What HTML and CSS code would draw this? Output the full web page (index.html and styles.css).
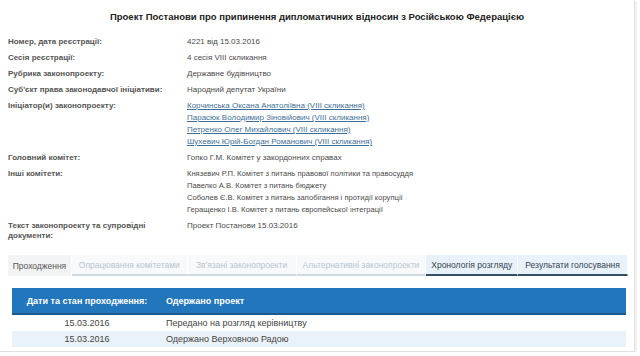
FILE: index.html
```html
<!DOCTYPE html>
<html lang="uk">
<head>
<meta charset="utf-8">
<title>Проект Постанови</title>
<link rel="stylesheet" href="styles.css">
</head>
<body>
<div class="page">
  <h1 class="title">Проект Постанови про припинення дипломатичних відносин з Російською Федерацією</h1>
  <div class="info">
    <div class="row"><div class="label">Номер, дата реєстрації:</div><div class="value">4221 від 15.03.2016</div></div>
    <div class="row"><div class="label">Сесія реєстрації:</div><div class="value">4 сесія VIII скликання</div></div>
    <div class="row"><div class="label">Рубрика законопроекту:</div><div class="value">Державне будівництво</div></div>
    <div class="row"><div class="label">Суб'єкт права законодавчої ініціативи:</div><div class="value">Народний депутат України</div></div>
    <div class="row"><div class="label">Ініціатор(и) законопроекту:</div>
      <div class="value">
        <a href="#">Корчинська Оксана Анатоліївна (VIII скликання)</a><br>
        <a href="#">Парасюк Володимир Зіновійович (VIII скликання)</a><br>
        <a href="#">Петренко Олег Михайлович (VIII скликання)</a><br>
        <a href="#">Шухевич Юрій-Богдан Романович (VIII скликання)</a>
      </div></div>
    <div class="row"><div class="label">Головний комітет:</div><div class="value">Гопко Г.М. Комітет у закордонних справах</div></div>
    <div class="row"><div class="label">Інші комітети:</div>
      <div class="value value-tight">
        Князевич Р.П. Комітет з питань правової політики та правосуддя<br>
        Павелко А.В. Комітет з питань бюджету<br>
        Соболев Є.В. Комітет з питань запобігання і протидії корупції<br>
        Геращенко І.В. Комітет з питань європейської інтеграції
      </div></div>
    <div class="row"><div class="label label-wrap">Текст законопроекту та супровідні документи:</div><div class="value">Проект Постанови 15.03.2016</div></div>
  </div>
  <div class="tabs">
    <span class="tab tab-active">Проходження</span>
    <span class="tab tab-off tab-w2">Опрацювання комітетами</span>
    <span class="tab tab-off tab-w3">Зв'язані законопроекти</span>
    <span class="tab tab-off tab-w4">Альтернативні законопроекти</span>
    <span class="tab tab-on tab-w5">Хронологія розгляду</span>
    <span class="tab tab-on tab-w6">Результати голосування</span>
  </div>
  <table class="flow">
    <thead>
      <tr><th class="col-date">Дати та стан проходження:</th><th class="col-state">Одержано проект</th></tr>
    </thead>
    <tbody>
      <tr><td class="col-date">15.03.2016</td><td class="col-state">Передано на розгляд керівництву</td></tr>
      <tr class="alt"><td class="col-date">15.03.2016</td><td class="col-state">Одержано Верховною Радою</td></tr>
    </tbody>
  </table>
</div>
</body>
</html>
```

FILE: styles.css
```css
html, body {
  margin: 0;
  padding: 0;
  background: #ffffff;
}
body {
  font-family: "Liberation Sans", Arial, sans-serif;
  color: #444444;
}
.page {
  width: 634px;
  height: 351px;
  border-right: 1px solid #e0e0e0;
  border-bottom: 1px solid #e0e0e0;
  box-shadow: 2px 1px 0 #f2f2f2;
  overflow: hidden;
}
.title {
  margin: 0;
  padding-top: 11px;
  font-size: 9.5px;
  line-height: 12px;
  font-weight: bold;
  text-align: center;
  color: #222222;
}
.info {
  margin-top: 11px;
  padding-left: 8px;
}
.row {
  display: grid;
  grid-template-columns: 179px 1fr;
  padding: 2px 0;
  line-height: 12px;
}
.label {
  font-size: 8px;
  font-weight: bold;
  color: #555555;
}
.label-wrap {
  max-width: 150px;
  line-height: 10px;
  padding-top: 1px;
}
.value {
  font-size: 8px;
  color: #4a4a4a;
}
.value-tight {
  font-size: 7.6px;
}
.value a {
  color: #3f6f98;
  text-decoration: underline;
}
.tabs {
  display: flex;
  margin: 12px 6px 0 8px;
  height: 21px;
  font-size: 8.5px;
}
.tab {
  display: flex;
  align-items: center;
  justify-content: center;
  box-sizing: border-box;
  height: 21px;
  border-right: 1px solid #ffffff;
}
.tab-active {
  width: 64px;
  background: #f3f4f5;
  color: #555555;
}
.tab-off {
  background: #f7f9fb;
  color: #b7c6d2;
  border-bottom: 2px solid #cfd8de;
}
.tab-on {
  background: #e9f2fa;
  color: #33434f;
  border-bottom: 2px solid #33505e;
}
.tab-w2 { width: 116px; }
.tab-w3 { width: 109px; }
.tab-w4 { width: 130px; }
.tab-w5 { width: 92px; }
.tab-w6 { width: 110px; }
.flow {
  margin: 12px 0 0 12px;
  width: 614px;
  border-collapse: collapse;
  font-size: 9px;
}
.flow th {
  height: 25px;
  background: #2276bb;
  border-bottom: 2px solid #1b5a8d;
  color: #ffffff;
  font-weight: bold;
  font-size: 9px;
  text-align: left;
  padding: 0;
}
.flow th.col-date {
  text-align: center;
}
.flow td {
  height: 16px;
  padding: 0;
  color: #444444;
}
.flow .col-date {
  width: 150px;
  text-align: center;
  padding-right: 4px;
}
.flow .col-state {
  padding-left: 0;
}
.flow tr.alt td {
  background: #eaf2f9;
}
```
